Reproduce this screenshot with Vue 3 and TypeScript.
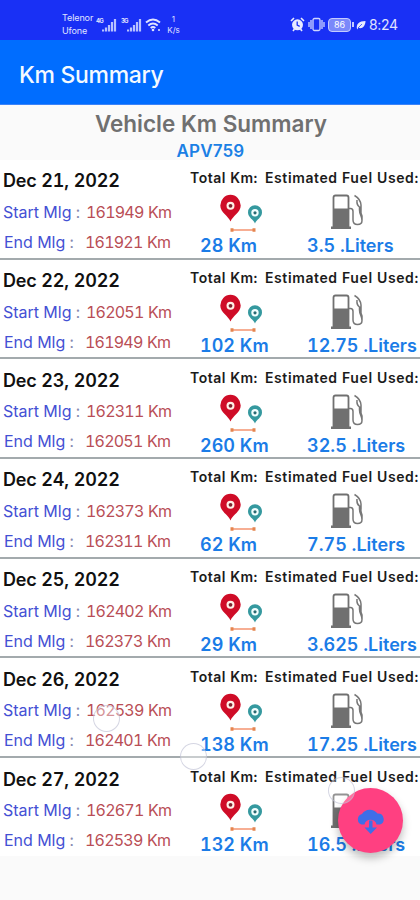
<script setup lang="ts">
interface Trip {
  day: number
  start: number
  end: number
  km: number
  fuel: string
}

const trips: Trip[] = [
  { day: 21, start: 161949, end: 161921, km: 28, fuel: '3.5' },
  { day: 22, start: 162051, end: 161949, km: 102, fuel: '12.75' },
  { day: 23, start: 162311, end: 162051, km: 260, fuel: '32.5' },
  { day: 24, start: 162373, end: 162311, km: 62, fuel: '7.75' },
  { day: 25, start: 162402, end: 162373, km: 29, fuel: '3.625' },
  { day: 26, start: 162539, end: 162401, km: 138, fuel: '17.25' },
  { day: 27, start: 162671, end: 162539, km: 132, fuel: '16.5' },
]
</script>

<template>
  <div class="screen">
    <div class="status">
      <div class="carriers"><span>Telenor</span><span>Ufone</span></div>
      <span class="gen">4G</span>
      <svg class="signal" width="15" height="14" viewBox="0 0 15 14">
        <path d="M1 13.5v-2M4 13.5V9.5M7 13.5V7M10 13.5V4M13 13.5V1" />
      </svg>
      <span class="gen second">3G</span>
      <svg class="signal" width="15" height="14" viewBox="0 0 15 14">
        <path d="M1 13.5v-2M4 13.5V9.5M7 13.5V7M10 13.5V4M13 13.5V1" />
      </svg>
      <svg class="wifi" width="17" height="14" viewBox="0 0 17 14">
        <path d="M1 4.5Q8 -1.500 15 4.500M3.300 7.500Q8 3.500 12.700 7.500M5.700 10Q8 8 10.300 10" />
        <circle cx="8" cy="12" r="1.300" />
        <circle cx="14" cy="12" r="1" />
      </svg>
      <div class="rate"><span>1</span><span>K/s</span></div>
      <div class="right">
        <svg width="15" height="15" viewBox="0 0 15 15">
          <path d="M1 4L4 1M11 1l3 3M3 14l1.500-2M12 14l-1.500-2" stroke="#e8eaff" stroke-width="1.600" />
          <circle cx="7.500" cy="7.800" r="5.500" fill="#e8eaff" />
          <path d="M7.200 4.500v3.600l2.500 1.200" fill="none" stroke="#1930f5" stroke-width="1.300" />
        </svg>
        <svg class="vibrate" width="17" height="15" viewBox="0 0 17 15">
          <rect x="5" y="1.500" width="7" height="12" rx="1.500" />
          <path d="M1 5v5M3 3v9M14 3v9M16 5v5" />
        </svg>
        <div class="battery">86</div>
        <svg class="leaf" width="10" height="10" viewBox="0 0 10 10">
          <path d="M1 9C0 4 3 1 9.500 1C9.500 6 6 9.500 2.500 7.800L1 9.500Z" fill="#e8eaff" />
          <path d="M2 8L6 4" stroke="#1930f5" stroke-width=".7" />
        </svg>
        <span class="clock">8:24</span>
      </div>
    </div>

    <header class="appbar">Km Summary</header>

    <div class="heading">
      <h1>Vehicle Km Summary</h1>
      <h2>APV759</h2>
    </div>

    <main class="list">
      <section v-for="trip in trips" :key="trip.day" class="trip">
        <div class="mileage">
          <div class="date">Dec {{ trip.day }}, 2022</div>
          <div class="line start">
            <span class="label">Start Mlg <i>:</i></span><span class="value">{{ trip.start }} Km</span>
          </div>
          <div class="line end">
            <span class="label">End Mlg <i>:</i></span><span class="value">{{ trip.end }} Km</span>
          </div>
        </div>
        <div class="total">
          <div class="caption">Total Km:</div>
          <svg class="pins" width="46" height="40" viewBox="0 0 46 40">
            <path d="M11.500 27.500C9.500 22 1.300 18.500 1.300 11.500A10.200 10.700 0 0 1 21.700 11.500C21.700 18.500 13.500 22 11.500 27.500Z" fill="#cf0c27" />
            <circle cx="11.500" cy="11.800" r="4" fill="#fff0e8" />
            <circle cx="11.500" cy="11.800" r="1.900" fill="#7c2330" />
            <path d="M36 29.500C34.500 25.500 29 23.500 29 18.500A7 7.300 0 0 1 43 18.500C43 23.500 37.500 25.500 36 29.500Z" fill="#35999f" />
            <circle cx="36" cy="18.800" r="3.700" fill="#f3ffff" />
            <circle cx="36" cy="18.800" r="1.600" fill="#286a72" />
            <path d="M12.500 36H35" stroke="#f6a080" stroke-width="1.700" />
            <path d="M11.500 34.300h3v3.400h-3zM33.500 34.300h3v3.400h-3z" fill="#e5854f" />
          </svg>
          <div class="amount">{{ trip.km }} Km</div>
        </div>
        <div class="fuel">
          <div class="caption">Estimated Fuel Used:</div>
          <svg class="pump" width="33" height="36" viewBox="0 0 33 36">
            <path d="M2.500 33V3.500Q2.500 1.500 4.500 1.500H15.500Q17.500 1.500 17.500 3.500V33" fill="#fff" stroke="#707070" stroke-width="1.800" />
            <path d="M2 14.500H18V33H2zM0 32.500H20V35H0z" fill="#707070" />
            <path d="M18 14.500H19.500Q22 14.500 22 17.500V26Q22 30.500 26.500 30.500Q31 30.500 31 26.500C31 22 28.500 20.500 28.500 16V13Q25.500 11 26 6M23.500 1.500Q29.500 5 30 11V16Q29.500 18 31 22V26" fill="none" stroke="#777" stroke-width="1.500" />
          </svg>
          <div class="amount">{{ trip.fuel }} .Liters</div>
        </div>
      </section>
    </main>

    <span class="touch one"></span>
    <span class="touch two"></span>
    <button class="fab" aria-label="Download">
      <svg width="29" height="29" viewBox="0 0 29 29">
        <path d="M5.500 18.500A5.500 5.500 0 0 1 6 8A9 8 0 0 1 21.500 7.500A5.700 5.700 0 0 1 24 18.500H20.500A6.200 6.200 0 0 0 8.500 18.500Z" fill="#3f6ee8" />
        <path d="M13 14.500h3.500v7h4.500L14.700 28L8.500 21.500H13Z" fill="#3f6ee8" />
      </svg>
    </button>
    <span class="touch three"></span>
  </div>
</template>

<style>
body { background: #fafafa; }
</style>

<style scoped>
.screen { position: relative; width: 420px; height: 900px; overflow: hidden; background: #fafafa; font-family: Inter, sans-serif; white-space: nowrap; }
.status { box-sizing: border-box; height: 40px; padding: 9px 23px 0 62px; display: flex; align-items: center; background: #1930f5; color: #e0e4ff; }
.carriers { display: flex; flex-direction: column; width: 34px; font-size: 9px; line-height: 12.500px; letter-spacing: -.1px; }
.gen { font-size: 6px; font-weight: 700; width: 6px; margin-bottom: 9px; letter-spacing: -.8px; }
.gen.second { margin-left: 4px; }
.signal { fill: none; stroke: #b7c0ff; stroke-width: 2.200; }
.wifi { margin-left: 3px; fill: none; stroke: #e0e4ff; stroke-width: 1.900; }
.wifi circle { fill: #e0e4ff; stroke: none; }
.rate { width: 17px; margin-left: 3px; font-size: 8px; line-height: 11px; display: flex; flex-direction: column; align-items: center; }
.right { margin-left: auto; display: flex; align-items: center; }
.right > svg:first-child { margin-right: 1px; }
.vibrate { margin-left: 2px; fill: none; stroke: #cfd5ff; stroke-width: 1.300; }
.battery { position: relative; box-sizing: border-box; width: 23px; height: 14px; margin: 0 5px 0 3px; border: 1.500px solid #c4cbff; border-radius: 4px; background: #7b88fa; color: #fff; font-size: 9px; line-height: 11px; text-align: center; }
.battery::after { content: ''; position: absolute; right: -4px; top: 3px; width: 2px; height: 5px; background: #c4cbff; }
.clock { margin-left: 3px; font-size: 14px; width: 28px; letter-spacing: -.3px; }
.appbar { box-sizing: border-box; height: 65px; padding-left: 19px; background: #006dff; color: #f4faff; font-size: 23px; font-weight: 500; line-height: 70px; letter-spacing: -.3px; border-bottom: 1px solid #3c83f7; }
.heading { height: 55px; padding-top: 1px; box-sizing: border-box; text-align: center; }
h1 { margin: 0; padding-left: 2px; font-size: 22.500px; line-height: 36px; font-weight: 600; color: #707070; }
h2 { margin: 0; padding-left: 1px; font-size: 17px; line-height: 18px; font-weight: 600; letter-spacing: .15px; color: #1b80e5; }
.list { display: flex; flex-direction: column; background: #fff; height: 696px; }
.trip { box-sizing: border-box; flex: none; height: 99.700px; display: flex; border-bottom: 2px solid #a3aaad; font-variant-numeric: tabular-nums; }
.trip:last-child { border: 0; height: 97px; }
.mileage { width: 190px; padding-left: 3px; box-sizing: border-box; }
.date { margin-top: 9.400px; font-size: 18px; line-height: 24px; font-weight: 600; letter-spacing: -.15px; color: #111; }
.line { display: flex; font-size: 16px; line-height: 30px; height: 30px; font-weight: 400; }
.start { margin-top: 3.600px; }
.label { width: 83px; color: #4450d4; }
.label i { font-style: normal; color: #8589b0; }
.value { color: #b94e56; letter-spacing: -.8px; word-spacing: 1px; }
.end .label { padding-left: 1px; width: 81px; }
.total { width: 75px; }
.caption { margin-top: 9.400px; font-size: 14px; line-height: 18px; font-weight: 600; letter-spacing: .6px; color: #1b1b1b; }
.total .caption { letter-spacing: .5px; }
.pins, .pump { display: block; margin: 7px 0 0 29px; }
.pump { margin-left: 66px; margin-bottom: 4px; }
.amount { font-size: 18px; line-height: 24px; font-weight: 600; color: #1b7ce7; }
.total .amount { margin: 0 0 0 10px; }
.fuel .amount { margin-left: 42px; }
.touch { position: absolute; box-sizing: border-box; width: 27px; height: 27px; border: 1.500px solid #b9bbd099; border-radius: 50%; background: #ffffff66; }
.one { left: 93px; top: 705px; }
.two { left: 180px; top: 743px; }
.three { left: 328px; top: 777px; background: #ffffff40; }
.fab { position: absolute; left: 338px; top: 788px; width: 65px; height: 65px; padding: 0; border: 0; border-radius: 50%; background: #ff4081; box-shadow: 0 5px 8px #0004; display: flex; align-items: center; justify-content: center; }
</style>
